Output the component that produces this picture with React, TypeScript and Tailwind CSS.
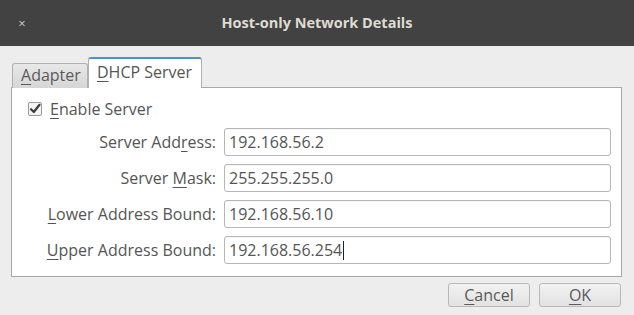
import React from "react";

const U = ({ children }: { children: React.ReactNode }) => (
  <span className="underline decoration-1 underline-offset-[3px]">{children}</span>
);

function Row({ label, value, cursor }: { label: React.ReactNode; value: string; cursor?: boolean }) {
  return (
    <>
      <div className="flex items-center justify-end h-[28px] text-[#555]">{label}</div>
      <div className="h-[28px] border border-[#b6b6b6] rounded-[3px] bg-white flex items-center pl-[4px] text-[#555] shadow-[inset_0_1px_0_rgba(0,0,0,0.04)]">
        <span>{value}</span>
        {cursor && <span className="inline-block w-px h-[19px] bg-[#222] ml-px" />}
      </div>
    </>
  );
}

export default function App() {
  return (
    <div
      className="w-[634px] h-[315px] bg-[#ededed] flex flex-col text-[16px] leading-none"
      style={{ fontFamily: '"Open Sans", "DejaVu Sans", sans-serif' }}
    >
      <div className="h-[46px] bg-[#424242] flex items-center shrink-0">
        <div className="w-[44px] flex justify-center text-[#c8c8c8] text-[13px]">×</div>
        <div className="flex-1 text-center text-[#dfdbd2] font-bold text-[14.5px]">Host-only Network Details</div>
        <div className="w-[44px]" />
      </div>
      <div className="pl-[11px] pr-[12px] pt-[11px] flex flex-col">
        <div className="flex items-end pl-[1px] h-[31px] -mb-px relative z-10">
          <div className="w-[76px] h-[25px] border border-[#b0b0b0] border-b-0 rounded-t-[3px] bg-gradient-to-b from-[#e8e8e8] to-[#d6d6d6] flex items-start pt-[3px] pl-[8px] text-[#5a5a5a]">
            <span><U>A</U>dapter</span>
          </div>
          <div className="w-[114px] h-[31px] border border-[#b0b0b0] border-t-[2px] border-t-[#4a90d9] border-b-0 rounded-t-[3px] bg-white flex items-start pt-[5px] pl-[8px] text-[#555]">
            <span><U>D</U>HCP Server</span>
          </div>
        </div>
        <div className="w-[611px] h-[190px] border border-[#a8a8a8] bg-white flex flex-col pl-[16px] pr-[10px]">
          <div className="flex items-center gap-[8px] mt-[13px] h-[16px]">
            <svg width="14" height="14" viewBox="0 0 14 14" className="shrink-0">
              <rect x="0.5" y="0.5" width="13" height="13" rx="1.5" fill="#f4f4f4" stroke="#9a9a9a" />
              <path d="M3 7.2 L5.8 10 L11.5 2.8" fill="none" stroke="#3a3a3a" strokeWidth="2.2" strokeLinecap="round" strokeLinejoin="round" />
            </svg>
            <span className="text-[#555]"><U>E</U>nable Server</span>
          </div>
          <div className="grid grid-cols-[auto_387px] justify-end gap-x-[8px] gap-y-[8px] mt-[11px]">
            <Row label={<span>Server Add<U>r</U>ess:</span>} value="192.168.56.2" />
            <Row label={<span>Server <U>M</U>ask:</span>} value="255.255.255.0" />
            <Row label={<span><U>L</U>ower Address Bound:</span>} value="192.168.56.10" />
            <Row label={<span><U>U</U>pper Address Bound:</span>} value="192.168.56.254" cursor />
          </div>
        </div>
        <div className="flex justify-end gap-[9px] mt-[6px] pr-[1px]">
          <div className="w-[82px] h-[24px] border border-[#b8b8b8] rounded-[3px] bg-gradient-to-b from-[#f2f2f2] to-[#e2e2e2] flex items-center justify-center text-[#5a5a5a]">
            <span><U>C</U>ancel</span>
          </div>
          <div className="w-[82px] h-[24px] border border-[#b8b8b8] rounded-[3px] bg-gradient-to-b from-[#f2f2f2] to-[#e2e2e2] flex items-center justify-center text-[#5a5a5a]">
            <span><U>O</U>K</span>
          </div>
        </div>
      </div>
    </div>
  );
}
